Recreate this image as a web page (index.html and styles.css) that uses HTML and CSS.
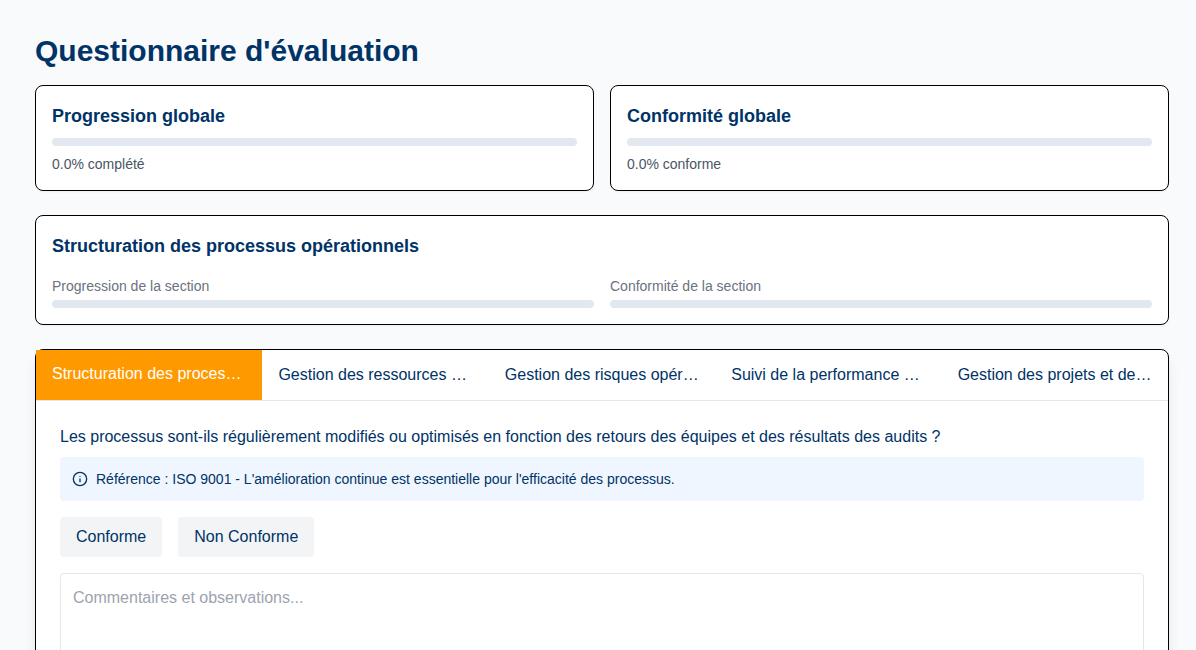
FILE: index.html
```html
<!DOCTYPE html>
<html lang="fr">
<head>
<meta charset="utf-8">
<meta name="viewport" content="width=device-width, initial-scale=1">
<title>Questionnaire d'évaluation</title>
<link rel="stylesheet" href="styles.css">
</head>
<body>
<main class="page">
  <h1 class="page-title">Questionnaire d'évaluation</h1>

  <div class="summary">
    <section class="card">
      <h2 class="card-title" id="global-progress">Progression globale</h2>
      <div class="bar bar-spaced" role="progressbar" aria-labelledby="global-progress" aria-valuenow="0"></div>
      <p class="card-value">0.0% complété</p>
    </section>
    <section class="card">
      <h2 class="card-title" id="global-conformity">Conformité globale</h2>
      <div class="bar bar-spaced" role="progressbar" aria-labelledby="global-conformity" aria-valuenow="0"></div>
      <p class="card-value">0.0% conforme</p>
    </section>
  </div>

  <section class="card">
    <h2 class="card-title">Structuration des processus opérationnels</h2>
    <div class="section-stats">
      <div>
        <p class="stat-label" id="section-progress">Progression de la section</p>
        <div class="bar" role="progressbar" aria-labelledby="section-progress" aria-valuenow="0"></div>
      </div>
      <div>
        <p class="stat-label" id="section-conformity">Conformité de la section</p>
        <div class="bar" role="progressbar" aria-labelledby="section-conformity" aria-valuenow="0"></div>
      </div>
    </div>
  </section>

  <section class="panel">
    <div class="tabs" role="tablist">
      <button class="tab tab-active" type="button" role="tab" aria-selected="true">Structuration des proces…</button>
      <button class="tab" type="button" role="tab" aria-selected="false">Gestion des ressources …</button>
      <button class="tab" type="button" role="tab" aria-selected="false">Gestion des risques opér…</button>
      <button class="tab" type="button" role="tab" aria-selected="false">Suivi de la performance …</button>
      <button class="tab" type="button" role="tab" aria-selected="false">Gestion des projets et de…</button>
    </div>
    <div class="question" role="tabpanel">
      <p class="question-text" id="question">Les processus sont-ils régulièrement modifiés ou optimisés en fonction des retours des équipes et des résultats des audits ?</p>
      <div class="reference">
        <svg class="reference-icon" viewBox="0 0 24 24" aria-hidden="true">
          <circle cx="12" cy="12" r="10"/>
          <path d="M12 16v-4M12 8h.01"/>
        </svg>
        <span>Référence : ISO 9001 - L'amélioration continue est essentielle pour l'efficacité des processus.</span>
      </div>
      <div class="answers">
        <button class="answer" type="button">Conforme</button>
        <button class="answer" type="button">Non Conforme</button>
      </div>
      <textarea class="comment" rows="4" aria-label="Commentaires et observations" placeholder="Commentaires et observations..."></textarea>
    </div>
  </section>
</main>
</body>
</html>
```
FILE: styles.css
```css
* {
  box-sizing: border-box;
}

body {
  margin: 0;
  background: #f9fafc;
  color: #003366;
  font: 16px/24px "Liberation Sans", Arial, sans-serif;
}

h1, h2, p {
  margin: 0;
}

button, textarea {
  font: inherit;
  color: inherit;
}

.page {
  padding: 32px 27px 32px 35px;
}

.page-title {
  margin-bottom: 16px;
  font-size: 30px;
  line-height: 37px;
}

.summary,
.section-stats {
  display: grid;
  grid-template-columns: 1fr 1fr;
  gap: 16px;
}

.summary {
  margin-bottom: 24px;
}

.card {
  padding: 16px;
  border: 1px solid #000;
  border-radius: 8px;
  background: #fff;
  box-shadow: 0 1px 2px rgba(0, 0, 0, 0.05);
}

.card-title {
  font-size: 18px;
  line-height: 28px;
}

.bar {
  height: 8px;
  border-radius: 4px;
  background: #e2e8f0;
}

.bar-spaced {
  margin: 8px 0;
}

.card-value,
.stat-label {
  font-size: 14px;
  line-height: 20px;
}

.card-value {
  color: #4b5563;
}

.section-stats {
  margin-top: 16px;
}

.stat-label {
  margin-bottom: 4px;
  color: #6b7280;
}

.panel {
  margin-top: 24px;
  border: 1px solid #000;
  border-radius: 8px;
  background: #fff;
  box-shadow: 0 10px 15px -3px rgba(0, 0, 0, 0.1), 0 4px 6px -4px rgba(0, 0, 0, 0.1);
}

.tabs {
  display: flex;
  border-bottom: 1px solid #e5e7eb;
}

.tab {
  flex: 1 1 0;
  min-width: 0;
  padding: 12px 16px;
  border: 0;
  background: transparent;
  text-align: left;
  white-space: nowrap;
  overflow: hidden;
  text-overflow: ellipsis;
}

.tab-active {
  border-bottom: 2px solid #ff9900;
  background: #ff9900;
  color: #fff;
}

.question {
  padding: 24px;
}

.reference {
  display: flex;
  align-items: center;
  gap: 8px;
  margin-top: 8px;
  padding: 12px;
  border-radius: 4px;
  background: #eff6ff;
  font-size: 14px;
  line-height: 20px;
}

.reference-icon {
  flex: none;
  width: 16px;
  height: 16px;
  fill: none;
  stroke: currentColor;
  stroke-width: 2;
  stroke-linecap: round;
  stroke-linejoin: round;
}

.answers {
  display: flex;
  gap: 16px;
  margin: 16px 0;
}

.answer {
  padding: 8px 16px;
  border: 0;
  border-radius: 4px;
  background: #f3f4f6;
}

.comment {
  display: block;
  width: 100%;
  padding: 12px;
  border: 1px solid #e5e7eb;
  border-radius: 4px;
  background: #fff;
  resize: vertical;
}

.comment::placeholder {
  color: #9ca3af;
}
```
